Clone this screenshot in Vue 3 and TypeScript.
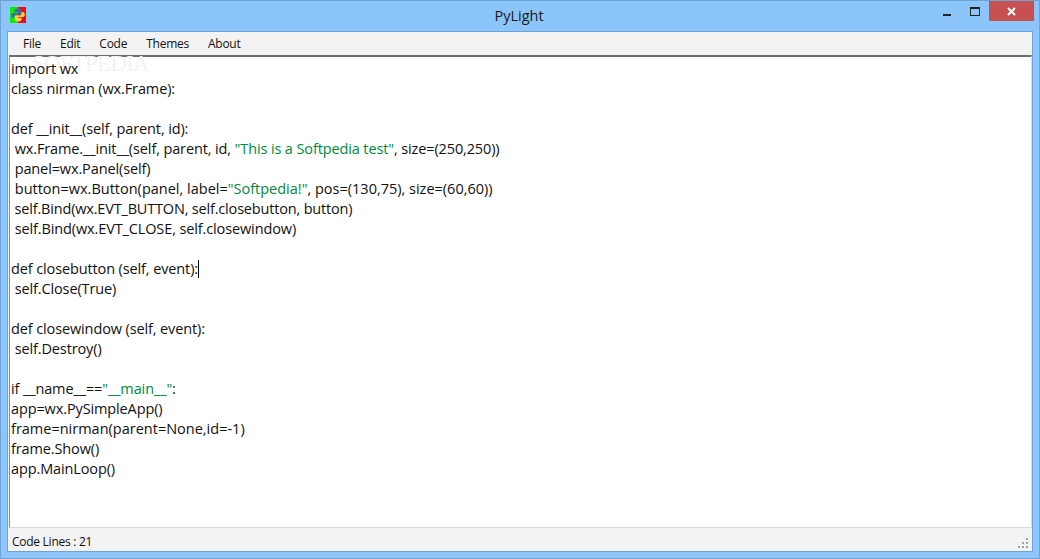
<script setup lang="ts">
interface Seg { t: string; s?: boolean }
const menus: string[] = ['File', 'Edit', 'Code', 'Themes', 'About']
const lines: Seg[][] = [
  [{ t: 'import wx' }],
  [{ t: 'class nirman (wx.Frame):' }],
  [],
  [{ t: 'def __init__(self, parent, id):' }],
  [{ t: ' wx.Frame.__init__(self, parent, id, ' }, { t: '"This is a Softpedia test"', s: true }, { t: ', size=(250,250))' }],
  [{ t: ' panel=wx.Panel(self)' }],
  [{ t: ' button=wx.Button(panel, label=' }, { t: '"Softpedia!"', s: true }, { t: ', pos=(130,75), size=(60,60))' }],
  [{ t: ' self.Bind(wx.EVT_BUTTON, self.closebutton, button)' }],
  [{ t: ' self.Bind(wx.EVT_CLOSE, self.closewindow)' }],
  [],
  [{ t: 'def closebutton (self, event):' }],
  [{ t: ' self.Close(True)' }],
  [],
  [{ t: 'def closewindow (self, event):' }],
  [{ t: ' self.Destroy()' }],
  [],
  [{ t: 'if __name__==' }, { t: '"__main__"', s: true }, { t: ':' }],
  [{ t: 'app=wx.PySimpleApp()' }],
  [{ t: 'frame=nirman(parent=None,id=-1)' }],
  [{ t: 'frame.Show()' }],
  [{ t: 'app.MainLoop()' }],
]
const grip: number[][] = [[8, 0], [4, 4], [8, 4], [0, 8], [4, 8], [8, 8]]
</script>

<template>
  <div class="window">
    <header class="titlebar">
      <svg class="appicon" width="16" height="16" viewBox="0 0 16 16">
        <rect width="8" height="16" fill="#0de80d" />
        <rect x="8" width="8" height="16" fill="#f00c0c" />
        <path d="M8 1.500c-2.500 0-3.600 1-3.600 2.400v1.400H8v.6H3.200C1.800 5.900 1.200 7 1.200 8.400s.7 2.600 2 2.600h1.300V9.400c0-1.200 1-2 2.200-2h2.800c1 0 1.800-.8 1.800-1.800V3.900C11.300 2.500 10.200 1.500 8 1.500z" fill="#3a6f9f" />
        <path d="M8 14.500c2.500 0 3.600-1 3.600-2.400v-1.400H8v-.6h4.800c1.400 0 2-1.100 2-2.500s-.7-2.600-2-2.600h-1.300v1.600c0 1.200-1 2-2.200 2H6.500c-1 0-1.800.8-1.800 1.800v1.700c0 1.400 1.100 2.400 3.300 2.400z" fill="#f6d34f" />
      </svg>
      <span class="title">PyLight</span>
      <div class="controls">
        <div class="ctl"><span class="min"></span></div>
        <div class="ctl"><span class="max"></span></div>
        <div class="close">
          <svg width="9" height="9" viewBox="0 0 9 9"><path d="M1 1l7 7M8 1l-7 7" stroke="#fff" stroke-width="2" fill="none" /></svg>
        </div>
      </div>
    </header>
    <div class="client">
      <nav class="menubar">
        <span v-for="m in menus" :key="m" class="menu">{{ m }}</span>
      </nav>
      <main class="editor">
        <span class="watermark">SOFTPEDIA</span>
        <div v-for="(line, i) in lines" :key="i" class="line" :class="{ wide: i === 6 || i === 18, tight: i === 7 }">
          <span v-for="(seg, j) in line" :key="j" :class="{ str: seg.s }">{{ seg.t }}</span>
          <span v-if="i === 10" class="caret"></span>
        </div>
      </main>
      <footer class="status">
        <span class="count">Code Lines : 21</span>
        <svg class="grip" width="11" height="11" viewBox="0 0 11 11">
          <rect v-for="(g, k) in grip" :key="k" :x="g[0]" :y="g[1]" width="2" height="2" fill="#a0a0a0" />
        </svg>
      </footer>
    </div>
  </div>
</template>

<style>
html, body { margin: 0; padding: 0; }
</style>

<style scoped>
.window {
  width: 1040px;
  height: 559px;
  box-sizing: border-box;
  display: flex;
  flex-direction: column;
  background: #8bc5fa;
  border: 1px solid #6fa3d6;
  padding: 0 6px 6px;
  font-family: "Open Sans", "Liberation Sans", sans-serif;
  overflow: hidden;
}
.titlebar {
  height: 30px;
  flex: none;
  display: flex;
  align-items: flex-start;
  position: relative;
}
.appicon { margin: 6px 0 0 3px; }
.title {
  position: absolute;
  left: 0;
  right: 2px;
  top: 5px;
  text-align: center;
  font-size: 14.5px;
  line-height: 20px;
  color: #1a1a1a;
}
.controls {
  margin-left: auto;
  display: flex;
  align-items: flex-start;
  position: relative;
  margin-right: -1px;
}
.ctl {
  width: 28px;
  height: 20px;
  display: flex;
  align-items: center;
  justify-content: center;
}
.min { width: 8px; height: 2px; background: #222; margin: 8px 0 0 0; }
.max { width: 8px; height: 6px; border: 1px solid #222; border-top-width: 2px; }
.close {
  width: 45px;
  height: 20px;
  background: #c75050;
  display: flex;
  align-items: center;
  justify-content: center;
}
.client {
  flex: 1;
  display: flex;
  flex-direction: column;
  min-height: 0;
  background: #f3f3f3;
  border: 1px solid #6fa3d6;
}
.menubar {
  height: 23px;
  flex: none;
  display: flex;
  align-items: center;
  padding-left: 15px;
  gap: 19px;
  font-size: 12px;
  letter-spacing: -0.25px;
  color: #111;
}
.editor {
  flex: 1;
  min-height: 0;
  position: relative;
  margin: 0 0 0 1px;
  background: #fff;
  border-top: 2px solid #6d6d6d;
  border-left: 1px solid #8a8a8a;
  border-right: 1px solid #dcdcdc;
  border-bottom: 1px solid #dcdcdc;
  padding: 2px 0 0 1px;
  font-size: 14.5px;
  line-height: 20px;
  color: #111;
  white-space: pre;
}
.line { position: relative; height: 20px; letter-spacing: -0.12px; }
.line.wide { letter-spacing: 0; }
.line.tight { letter-spacing: -0.18px; }
.str { color: #008a3c; }
.caret {
  display: inline-block;
  width: 1px;
  height: 18px;
  background: #000;
  vertical-align: -4px;
}
.watermark {
  position: absolute;
  left: 22px;
  top: -2px;
  font-family: "Liberation Serif", serif;
  font-size: 23px;
  letter-spacing: -0.8px;
  line-height: 17px;
  color: #f3f3f3;
}
.status {
  height: 23px;
  flex: none;
  display: flex;
  align-items: center;
  justify-content: space-between;
  padding: 0 3px 0 4px;
  font-size: 12px;
  letter-spacing: -0.27px;
  color: #111;
}
.count { padding-top: 3px; }
.grip { margin-top: 7px; }
</style>
